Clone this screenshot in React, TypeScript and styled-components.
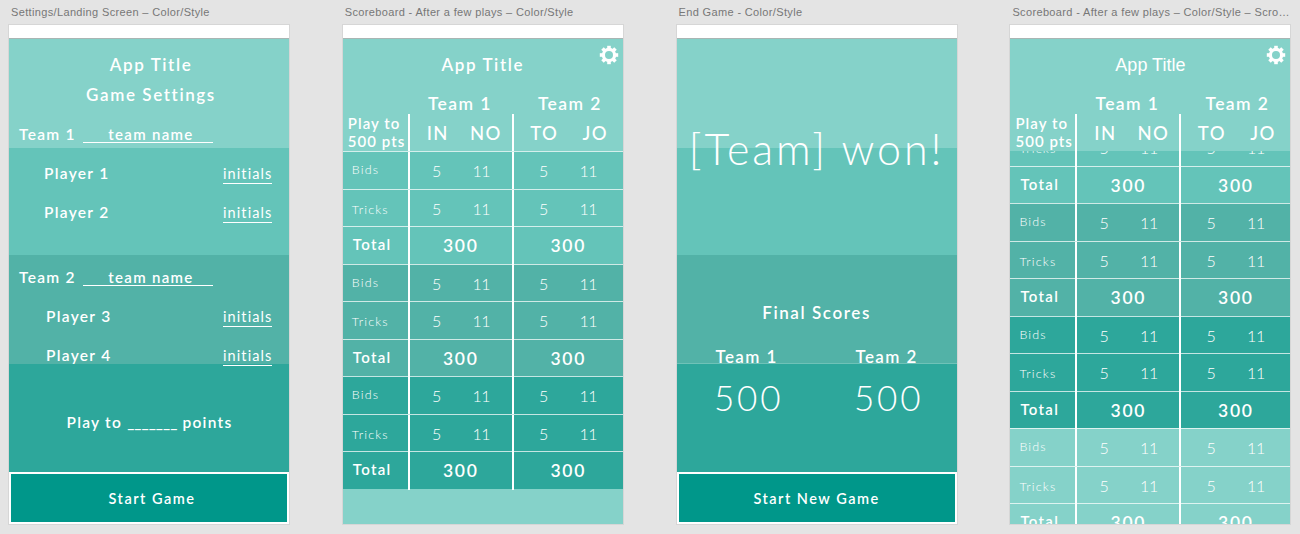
import React from 'react';
import styled, { createGlobalStyle } from 'styled-components';

const color = {
  light: '#85d2c9',
  medium: '#64c4b9',
  dark: '#52b2a7',
  darker: '#2da79b',
  button: '#00978a',
};

type Shade = 'light' | 'medium' | 'dark' | 'darker';
type RowKind = 'Bids' | 'Tricks' | 'Total';

const GlobalStyle = createGlobalStyle`
  html, body {
    margin: 0;
    height: 100%;
    overflow: hidden;
    background: #e4e4e4;
  }
  * {
    box-sizing: border-box;
  }
`;

const Page = styled.div`
  display: flex;
  gap: 51.8px;
  padding-left: 8px;
  font-family: Lato, 'Noto Sans', sans-serif;
  color: #fff;
`;

const Artboard = styled.section`
  width: 282px;
  flex: none;
`;

const ArtboardLabel = styled.div`
  height: 24px;
  padding: 5px 0 0 3px;
  font: 11px/14px 'Liberation Sans', Arial, sans-serif;
  letter-spacing: 0.35px;
  color: #777;
  white-space: nowrap;
  overflow: hidden;
  text-overflow: ellipsis;
`;

const Phone = styled.div`
  height: 501px;
  display: flex;
  flex-direction: column;
  border: 1px solid #d6d6d6;
  background: ${color.light};
  overflow: hidden;
`;

const StatusBar = styled.div`
  height: 14px;
  flex: none;
  background: #fff;
  border-bottom: 1px solid #a9b5b3;
`;

// the tall screens are four even bands with the content running across them
const BandedBody = styled.div<{ $seam?: boolean }>`
  flex: 1;
  min-height: 0;
  display: flex;
  flex-direction: column;
  background: linear-gradient(
    ${color.light} 0 109px,
    ${color.medium} 109px 216px,
    ${color.dark} 216px 324px,
    ${({ $seam }) => ($seam ? '#6fc2b8' : color.dark)} 324px 325px,
    ${color.darker} 325px
  );
`;

const Heading = styled.h1<{ $top: number }>`
  margin: ${({ $top }) => $top}px 0 0;
  padding-left: 4px;
  font-size: 17px;
  line-height: 22px;
  font-weight: 600;
  letter-spacing: 1.6px;
  text-align: center;
`;

const TeamField = styled.div<{ $top: number }>`
  display: flex;
  align-items: center;
  height: 20px;
  margin-top: ${({ $top }) => $top}px;
  padding-left: 10px;
  font-size: 15.5px;
  font-weight: 600;
  letter-spacing: 1.3px;
`;

const TeamInput = styled.span`
  width: 130px;
  height: 18px;
  margin-left: 7px;
  padding-left: 6px;
  border-bottom: 1px solid #fff;
  font-size: 15px;
  line-height: 18px;
  letter-spacing: 1.3px;
  text-align: center;
`;

const PlayerRow = styled.div<{ $top: number; $indent: number }>`
  display: flex;
  justify-content: space-between;
  align-items: center;
  height: 20px;
  margin-top: ${({ $top }) => $top}px;
  padding: 0 17px 0 ${({ $indent }) => $indent}px;
  font-size: 15.5px;
  font-weight: 600;
  letter-spacing: 1.3px;
`;

const InitialsInput = styled.span`
  width: 49px;
  margin-top: 2px;
  border-bottom: 1px solid #fff;
  font-size: 14.5px;
  line-height: 19px;
  font-weight: 400;
  letter-spacing: 1.1px;
  text-align: center;
  white-space: nowrap;
`;

const PlayTo = styled.div`
  margin-top: 47px;
  padding-left: 1px;
  font-size: 15.5px;
  line-height: 20px;
  font-weight: 600;
  letter-spacing: 1.25px;
  text-align: center;
`;

const PointsBlank = styled.span`
  letter-spacing: 0;
`;

const WonMessage = styled.div`
  margin-top: 84px;
  font-size: 43px;
  line-height: 52px;
  font-weight: 300;
  letter-spacing: 2.9px;
  text-align: center;
  white-space: nowrap;
`;

const FinalTitle = styled.h2`
  margin: 128px 0 0;
  font-size: 17px;
  line-height: 20px;
  font-weight: 600;
  letter-spacing: 1.6px;
  text-align: center;
`;

const FinalScores = styled.div`
  display: grid;
  grid-template-columns: 140px 140px;
  justify-content: center;
  margin-top: 24px;
  text-align: center;
`;

const FinalTeam = styled.div`
  font-size: 17px;
  line-height: 20px;
  font-weight: 600;
  letter-spacing: 1.4px;
`;

const FinalPoints = styled.div`
  margin-top: 8px;
  padding-left: 4px;
  font-size: 35px;
  line-height: 44px;
  font-weight: 300;
  letter-spacing: 2.8px;
`;

const ActionButton = styled.button<{ $inset: number }>`
  height: 52px;
  flex: none;
  margin-top: auto;
  padding-left: ${({ $inset }) => $inset}px;
  border: 2px solid #fff;
  background: ${color.button};
  color: #fff;
  font-family: inherit;
  font-size: 14.5px;
  font-weight: 600;
  letter-spacing: 1.5px;
`;

const ScoreScreen = styled.div`
  position: relative;
  flex: 1;
  min-height: 0;
  display: flex;
  flex-direction: column;
`;

const GearButton = styled.svg`
  position: absolute;
  top: 6px;
  right: 4px;
  width: 20px;
  height: 20px;
`;

const AppTitle = styled.h1<{ $plain?: boolean }>`
  height: 52px;
  margin: 0;
  font-family: ${({ $plain }) => ($plain ? "'Liberation Sans', Arial, sans-serif" : 'inherit')};
  font-size: ${({ $plain }) => ($plain ? '18px' : '17px')};
  line-height: 52px;
  font-weight: ${({ $plain }) => ($plain ? 400 : 600)};
  letter-spacing: ${({ $plain }) => ($plain ? '0' : '1.6px')};
  text-align: center;
`;

const ScoreGrid = styled.div`
  display: grid;
  grid-template-columns: 65px 104px 1fr;
`;

const TeamHeader = styled(ScoreGrid)`
  height: 23px;
  font-size: 17.5px;
  line-height: 25px;
  font-weight: 600;
  letter-spacing: 1.4px;
  text-align: center;

  span:last-child {
    padding-left: 5px;
  }
`;

const InitialsHeader = styled(ScoreGrid)`
  height: 37px;
`;

const PlayToNote = styled.div`
  padding-left: 5px;
  font-size: 15px;
  line-height: 18px;
  font-weight: 600;
  letter-spacing: 1.05px;
  white-space: nowrap;
`;

const HeaderPair = styled.div<{ $inset: number; $width: number }>`
  display: grid;
  grid-template-columns: repeat(2, ${({ $width }) => $width}px);
  padding-left: ${({ $inset }) => $inset}px;
  border-left: 2px solid #fff;
  font-size: 18.5px;
  line-height: 38px;
  font-weight: 500;
  letter-spacing: 1.4px;
  text-align: center;
`;

const RowsViewport = styled.div`
  flex: 1;
  min-height: 0;
  overflow: hidden;
`;

const RowsTrack = styled.div<{ $scroll: number }>`
  margin-top: ${({ $scroll }) => -$scroll}px;
`;

const Row = styled(ScoreGrid)<{ $shade: Shade }>`
  height: 37.5px;
  background: ${({ $shade }) => color[$shade]};
  border-top: 1px solid rgba(255, 255, 255, 0.72);
`;

const RowLabel = styled.div<{ $kind: RowKind }>`
  padding-left: ${({ $kind }) => ($kind === 'Total' ? '10px' : '9px')};
  padding-top: ${({ $kind }) => ($kind === 'Tricks' ? '2px' : '0')};
  font-size: ${({ $kind }) => ($kind === 'Total' ? '15px' : '12.5px')};
  line-height: ${({ $kind }) => ($kind === 'Total' ? '35px' : '36px')};
  font-weight: ${({ $kind }) => ($kind === 'Total' ? 600 : 300)};
  letter-spacing: ${({ $kind }) => ($kind === 'Total' ? '1.3px' : '1.15px')};
`;

const PairCell = styled.div<{ $inset: number }>`
  display: grid;
  grid-template-columns: 45px 45px;
  padding-left: ${({ $inset }) => $inset}px;
  border-left: 2px solid #fff;
  font-size: 16px;
  line-height: 37px;
  font-weight: 300;
  letter-spacing: -0.5px;
  text-align: center;
`;

const TotalCell = styled.div`
  border-left: 2px solid #fff;
  font-size: 17.5px;
  line-height: 38px;
  font-weight: 600;
  letter-spacing: 1.7px;
  text-align: center;
`;

const ScoreRow: React.FC<{ kind: RowKind; shade: Shade }> = ({ kind, shade }) => (
  <Row $shade={shade}>
    <RowLabel $kind={kind}>{kind}</RowLabel>
    {kind === 'Total' ? (
      <>
        <TotalCell>300</TotalCell>
        <TotalCell>300</TotalCell>
      </>
    ) : (
      <>
        <PairCell $inset={4}>
          <span>5</span>
          <span>11</span>
        </PairCell>
        <PairCell $inset={7}>
          <span>5</span>
          <span>11</span>
        </PairCell>
      </>
    )}
  </Row>
);

const kinds: RowKind[] = ['Bids', 'Tricks', 'Total'];

const hands = (shades: Shade[]) =>
  shades.flatMap((shade) => kinds.map((kind) => ({ kind, shade })));

// ring with eight square teeth
const teeth = [0, 45, 90, 135, 180, 225, 270, 315];

const Gear: React.FC = () => (
  <GearButton viewBox="0 0 20 20" fill="none">
    <circle cx="10" cy="10" r="5.6" stroke="#fff" strokeWidth="3.2" />
    {teeth.map((angle) => (
      <rect
        key={angle}
        x="8.2"
        y="0.8"
        width="3.6"
        height="3.6"
        fill="#fff"
        transform={`rotate(${angle} 10 10)`}
      />
    ))}
  </GearButton>
);

const Scoreboard: React.FC<{
  rows: { kind: RowKind; shade: Shade }[];
  scroll?: number;
  plainTitle?: boolean;
}> = ({ rows, scroll = 0, plainTitle }) => (
  <ScoreScreen>
    <Gear />
    <AppTitle $plain={plainTitle}>App Title</AppTitle>
    <TeamHeader>
      <span />
      <span>Team 1</span>
      <span>Team 2</span>
    </TeamHeader>
    <InitialsHeader>
      <PlayToNote>
        Play to
        <br />
        500 pts
      </PlayToNote>
      <HeaderPair $inset={4} $width={48}>
        <span>IN</span>
        <span>NO</span>
      </HeaderPair>
      <HeaderPair $inset={5} $width={51}>
        <span>TO</span>
        <span>JO</span>
      </HeaderPair>
    </InitialsHeader>
    <RowsViewport>
      <RowsTrack $scroll={scroll}>
        {rows.map((row, i) => (
          <ScoreRow key={i} kind={row.kind} shade={row.shade} />
        ))}
      </RowsTrack>
    </RowsViewport>
  </ScoreScreen>
);

const scrolledRows = [
  { kind: 'Tricks' as RowKind, shade: 'medium' as Shade },
  { kind: 'Total' as RowKind, shade: 'medium' as Shade },
  ...hands(['dark', 'darker', 'light']),
];

const App: React.FC = () => (
  <>
    <GlobalStyle />
    <Page>
      <Artboard>
        <ArtboardLabel>Settings/Landing Screen – Color/Style</ArtboardLabel>
        <Phone>
          <StatusBar />
          <BandedBody>
            <Heading $top={15}>App Title</Heading>
            <Heading $top={8}>Game Settings</Heading>
            <TeamField $top={18}>
              Team 1<TeamInput>team name</TeamInput>
            </TeamField>
            <PlayerRow $top={19} $indent={35}>
              Player 1<InitialsInput>initials</InitialsInput>
            </PlayerRow>
            <PlayerRow $top={19} $indent={35}>
              Player 2<InitialsInput>initials</InitialsInput>
            </PlayerRow>
            <TeamField $top={45}>
              Team 2<TeamInput>team name</TeamInput>
            </TeamField>
            <PlayerRow $top={19} $indent={37}>
              Player 3<InitialsInput>initials</InitialsInput>
            </PlayerRow>
            <PlayerRow $top={19} $indent={37}>
              Player 4<InitialsInput>initials</InitialsInput>
            </PlayerRow>
            <PlayTo>
              Play to <PointsBlank>_______</PointsBlank> points
            </PlayTo>
            <ActionButton $inset={12}>Start Game</ActionButton>
          </BandedBody>
        </Phone>
      </Artboard>

      <Artboard>
        <ArtboardLabel>Scoreboard - After a few plays – Color/Style</ArtboardLabel>
        <Phone>
          <StatusBar />
          <Scoreboard rows={hands(['medium', 'dark', 'darker'])} />
        </Phone>
      </Artboard>

      <Artboard>
        <ArtboardLabel>End Game - Color/Style</ArtboardLabel>
        <Phone>
          <StatusBar />
          <BandedBody $seam>
            <WonMessage>[Team] won!</WonMessage>
            <FinalTitle>Final Scores</FinalTitle>
            <FinalScores>
              <div>
                <FinalTeam>Team 1</FinalTeam>
                <FinalPoints>500</FinalPoints>
              </div>
              <div>
                <FinalTeam>Team 2</FinalTeam>
                <FinalPoints>500</FinalPoints>
              </div>
            </FinalScores>
            <ActionButton $inset={6}>Start New Game</ActionButton>
          </BandedBody>
        </Phone>
      </Artboard>

      <Artboard>
        <ArtboardLabel>Scoreboard - After a few plays – Color/Style – Scrolled Down</ArtboardLabel>
        <Phone>
          <StatusBar />
          <Scoreboard rows={scrolledRows} scroll={23} plainTitle />
        </Phone>
      </Artboard>
    </Page>
  </>
);

export default App;
